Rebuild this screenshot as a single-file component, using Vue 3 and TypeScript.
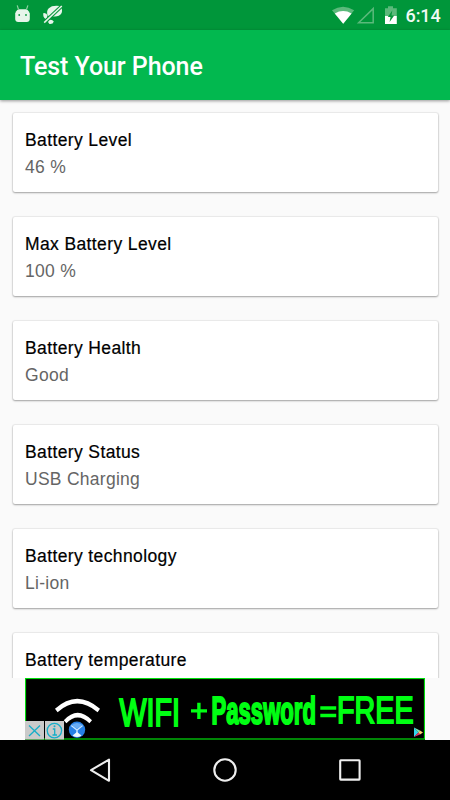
<script setup lang="ts">
interface Reading {
  label: string
  value: string
}

const readings: Reading[] = [
  { label: 'Battery Level', value: '46 %' },
  { label: 'Max Battery Level', value: '100 %' },
  { label: 'Battery Health', value: 'Good' },
  { label: 'Battery Status', value: 'USB Charging' },
  { label: 'Battery technology', value: 'Li-ion' },
  { label: 'Battery temperature', value: '' },
]
</script>

<template>
  <div class="phone">
    <header class="status">
      <svg class="notifications" width="56" height="24" viewBox="10 3 56 24">
        <g fill="#e6f5ea">
          <path d="M15.2 13.6 16 11.5Q17 9.6 19 9.2L26 9.2Q27.8 9.6 28.9 11.5L29.8 13.6V19Q29.5 22 26.8 22H18.2Q15.4 22 15.2 19Z" />
          <path d="M18.6 9.8 17.2 5.4M26.4 9.8 27.9 5.4" fill="none" stroke="#8fd0a1" stroke-width="1.2" />
          <circle cx="19.2" cy="15" r=".9" fill="#069a3c" />
          <circle cx="26" cy="15" r=".9" fill="#069a3c" />
        </g>
        <g fill="#e6f5ea">
          <path d="M47.8 15.8Q46 11 48.8 8.2Q52.2 4.9 60 6L61.8 8.6Q63 13.8 58.8 15.8Q55.4 17.2 51.2 16Z" />
          <path d="M43.4 13Q46.8 12.6 47.5 15.5Q47.4 18.4 45.4 18.9Q42.6 17 43.4 13ZM48.2 20.4Q51.8 18.6 53.8 21.4Q53 24.4 49.5 24Q47.7 22.4 48.2 20.4Z" />
          <path d="M44.5 22.4 61.8 6" stroke="#06963a" stroke-width="3.6" />
          <path d="M44.2 22.6 61.8 6" stroke="#e6f5ea" stroke-width="1.5" />
        </g>
      </svg>
      <svg class="signals" width="70" height="24" viewBox="330 3 70 24">
        <path d="M332 10.2Q343 3.2 354.2 10.2L343.2 23.7Z" fill="#5bb97b" />
        <path d="M334.8 13.5Q343 8.7 351.6 13.5L343.2 23.7Z" fill="#fff" />
        <path d="M358.6 22.7 373.2 8.6V22.7Z" fill="none" stroke="#5bb97b" stroke-width="1.5" />
        <path d="M385 8.2H388V6.3H393V8.2H396.8V16.5H385Z" fill="#5bb97b" />
        <path d="M385 16H396.8V24H385Z" fill="#fff" />
        <path d="M392.3 10.5 387.8 17H390.5L389.6 22 394.2 15.4H391.5Z" fill="#06963a" />
      </svg>
      <span class="clock">6:14</span>
    </header>

    <div class="toolbar"><h1>Test Your Phone</h1></div>

    <main class="list">
      <section v-for="item in readings" :key="item.label" class="card">
        <div class="label">{{ item.label }}</div>
        <div class="value">{{ item.value }}</div>
      </section>
    </main>

    <aside class="ad">
      <svg width="400" height="62" viewBox="25 678 400 62">
        <rect x="25" y="678" width="400" height="62" fill="#000" />
        <rect x="25.5" y="678.5" width="399" height="60.5" fill="none" stroke="#00df0b" stroke-width="1.2" />
        <g fill="#fff">
          <path d="M55 708.8Q77 688.8 100 708.8L97.6 712.2Q77 694.8 57.6 712.2Z" />
          <path d="M63.8 720.2Q77.5 705.2 92 720.2L89.4 723.2Q77.5 711.6 66.4 723.2Z" />
        </g>
        <circle cx="77" cy="729.7" r="8.2" fill="#2780e5" />
        <path d="M71.3 725.5 77 730 82.5 725.5M77 730V733" fill="none" stroke="#c5e2ff" stroke-width="1.5" />
        <path d="M71.6 725Q77 721 82.5 725L77 729Z" fill="#68acf4" />
        <path d="M77 732 81.5 735.4Q77 738.5 72.5 735.4Z" fill="#eef7ff" />
        <g class="promo" fill="#00ff13">
          <text transform="translate(119.5 725.6) scale(.735 1)" font-size="39" class="wifi">WIFI</text>
          <path d="M191 709.2H197.2V702.8H200.6V709.2H207V712.6H200.6V719H197.2V712.6H191Z" />
          <text transform="translate(211.5 724) scale(.56 1)" font-size="39.5" class="password">Password</text>
          <path d="M320.3 706.3H336.2V709.8H320.3ZM320.3 713.7H336.2V717.2H320.3Z" />
          <text transform="translate(337 722.8) scale(.78 1)" font-size="36.8" class="free">FREE</text>
        </g>
        <path d="M25 721H44V739.5H25ZM45 721H64V739.5H45Z" fill="#cacaca" />
        <g fill="none" stroke="#16aec8" stroke-width="1.3">
          <path d="M29 725.5 40 736M40 725.5 29 736" />
          <circle cx="54.4" cy="730.6" r="7.2" />
          <path d="M52.8 729H54.7V735M52.5 735H57" />
        </g>
        <circle cx="54.5" cy="726.3" r="1" fill="#16aec8" />
        <path d="M414 727.5V737L418.5 732.4Z" fill="#30d6ed" />
        <path d="M414 727.5 420 730.5 418.5 732.4Z" fill="#77e5b5" />
        <path d="M420 730.5 423 732.5 420 734.5 418.3 732.4Z" fill="#ffd06c" />
        <path d="M414 737 420 734.5 418.3 732.4Z" fill="#e43465" />
      </svg>
    </aside>

    <nav class="navigation">
      <svg width="450" height="60" viewBox="0 740 450 60" fill="none" stroke="#eee" stroke-width="2.1" stroke-linejoin="round">
        <path d="M91 770.2 109 759.6V780.8Z" />
        <circle cx="225" cy="770" r="10.7" />
        <rect x="340.2" y="760.2" width="19.4" height="19.4" rx=".5" />
      </svg>
    </nav>
  </div>
</template>

<style>
body { margin: 0; overflow: hidden; }
</style>

<style scoped>
.phone {
  width: 450px;
  height: 800px;
  display: flex;
  flex-direction: column;
  overflow: hidden;
  background: #fafafa;
}
.status {
  flex: 0 0 30px;
  display: flex;
  align-items: center;
  box-sizing: border-box;
  padding: 0 10px;
  background: #00963a;
}
.notifications { flex-shrink: 0; }
.signals { margin-left: auto; flex-shrink: 0; }
.clock {
  width: 34.5px;
  margin: 1px 0 0 5.5px;
  color: #f1faf4;
  font: 500 18px/24px Roboto, sans-serif;
  letter-spacing: -.1px;
  white-space: nowrap;
}
.toolbar {
  flex: 0 0 70px;
  display: flex;
  align-items: center;
  padding-left: 20px;
  background: #02b84f;
  box-shadow: 0 1px 3px rgba(0, 0, 0, .4);
  z-index: 1;
}
h1 {
  margin: 3px 0 0;
  color: #fff;
  font: 500 25px/34px Roboto, sans-serif;
  letter-spacing: -.07px;
}
.list {
  flex: 1;
  min-height: 0;
  display: flex;
  flex-direction: column;
  gap: 25.17px;
  overflow: hidden;
  padding: 12.5px 12.5px 0;
}
.card {
  flex: 0 0 79px;
  box-sizing: border-box;
  padding: 14px 12.5px 0;
  border-radius: 2px;
  background: #fff;
  box-shadow: 0 0 1px 1px rgba(0, 0, 0, .06), 0 1px 2px rgba(0, 0, 0, .32);
  font: 17.5px/27px "Liberation Sans", Arial, sans-serif;
}
.label { color: #000; letter-spacing: .38px; -webkit-text-stroke: .2px #000; }
.value { color: #656565; letter-spacing: .27px; }
.ad { flex: 0 0 62px; padding-left: 25px; background: #fafafa; }
.navigation { flex: 0 0 60px; background: #000; }
svg { display: block; }
.promo { font-family: "Liberation Sans", Arial, sans-serif; }
.wifi { stroke: #00ff13; stroke-width: 2; }
.password { font-weight: 700; stroke: #00ff13; stroke-width: 2; }
.free { stroke: #00ff13; stroke-width: 1.8; }
</style>
